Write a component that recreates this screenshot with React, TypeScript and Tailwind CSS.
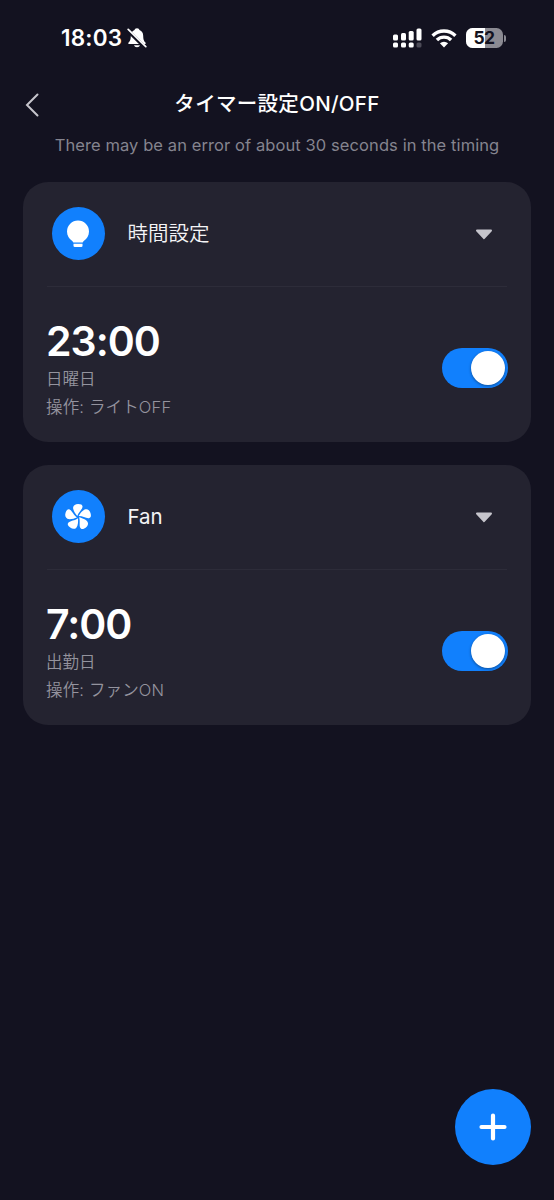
import { useState } from "react";

interface Timer {
  id: string;
  title: string;
  icon: "light" | "fan";
  time: string;
  days: string;
  action: string;
}

const TIMERS: Timer[] = [
  { id: "light", title: "時間設定", icon: "light", time: "23:00", days: "日曜日", action: "操作: ライトOFF" },
  { id: "fan", title: "Fan", icon: "fan", time: "7:00", days: "出勤日", action: "操作: ファンON" },
];

function BellOffIcon() {
  return (
    <svg width="20" height="22" viewBox="0 0 20 22" className="ml-[5px]">
      <path
        d="M10 1.2c1.5 0 2.3.8 2.5 1.9 2.4.9 3.7 3 3.7 5.6 0 4 .8 5.200 2.200 6.800.7.8.3 1.600-.7 1.600H2.300c-1 0-1.400-.8-.7-1.600C3 13.900 3.800 12.700 3.800 8.700c0-2.600 1.300-4.700 3.700-5.600.2-1.100 1-1.900 2.500-1.900Z"
        fill="#fff"
      />
      <path d="M7 18.300h6c-.4 1.200-1.500 2-3 2s-2.600-.8-3-2Z" fill="#fff" />
      <path d="M.4 3.200 18 20.400" stroke="#131220" strokeWidth="3.600" />
      <path d="M1.200 2.400 18.800 19.600" stroke="#fff" strokeWidth="1.700" strokeLinecap="round" />
    </svg>
  );
}

function SignalIcon() {
  return (
    <svg width="29" height="20" viewBox="0 0 29 20">
      <g fill="#fff">
        <rect x="0" y="6.500" width="5" height="6" rx="1.500" />
        <rect x="8" y="5" width="5" height="7.500" rx="1.500" />
        <rect x="15.700" y="3" width="5" height="9.500" rx="1.500" />
        <rect x="23.500" y="0.500" width="5" height="12" rx="1.500" />
        <rect x="0" y="14.500" width="5" height="5" rx="1.500" />
        <rect x="8" y="14.500" width="5" height="5" rx="1.500" />
        <rect x="15.700" y="14.500" width="5" height="5" rx="1.500" />
      </g>
      <rect x="23.500" y="14.500" width="5" height="5" rx="1.500" fill="#4c4b57" />
    </svg>
  );
}

function WifiIcon() {
  return (
    <svg width="26" height="19" viewBox="0 0 26 19" className="ml-[9px]">
      <g fill="none" stroke="#fff" strokeWidth="3.400">
        <path d="M1.600 6.700a16.200 16.200 0 0 1 22.800 0" />
        <path d="M5.900 11a10.100 10.100 0 0 1 14.200 0" />
      </g>
      <path d="M13 18.500 8.900 14.300a5.900 5.900 0 0 1 8.200 0Z" fill="#fff" />
    </svg>
  );
}

function Battery({ level }: { level: number }) {
  return (
    <div className="ml-[9px] flex items-center">
      <div className="relative h-5 w-[37px] overflow-hidden rounded-[6.5px] bg-[#8b8a92]">
        <div className="h-full bg-white" style={{ width: `${level}%` }} />
        <span className="absolute inset-0 text-center text-[17.500px] leading-[20px] font-bold tracking-[-0.5px] text-[#131220]">
          {level}
        </span>
      </div>
      <div className="ml-[1px] h-[7px] w-[2.500px] rounded-r-full bg-[#8b8a92]" />
    </div>
  );
}

function BulbIcon() {
  return (
    <svg width="24" height="28" viewBox="0 0 24 28">
      <path
        d="M12 .5a11 11 0 0 1 11 11c0 4.300-2.300 7.200-4.700 9.100-.8.600-1.400 1.100-1.600 1.900H7.300c-.2-.8-.8-1.300-1.600-1.900C3.300 18.700 1 15.800 1 11.500a11 11 0 0 1 11-11Z"
        fill="#fff"
      />
      <path d="M7.500 23.800h9v1.900a1.300 1.300 0 0 1-1.300 1.300H8.800a1.300 1.300 0 0 1-1.300-1.300Z" fill="#fff" />
    </svg>
  );
}

function FanIcon() {
  return (
    <svg width="28" height="28" viewBox="-14 -14 28 28">
      {[0, 72, 144, 216, 288].map((deg) => (
        <path
          key={deg}
          transform={`rotate(${deg})`}
          d="M-.7-.9C-2.600-3.200-5.200-6.800-4.900-9.600c.3-2.300 2.400-3.500 5-3.500 2.900 0 4.700.9 4.400 3.100C4.100-7.300.4-4.600-.7-.9Z"
          fill="#fff"
        />
      ))}
    </svg>
  );
}

function Toggle({ on, onChange }: { on: boolean; onChange: () => void }) {
  return (
    <button
      role="switch"
      aria-checked={on}
      onClick={onChange}
      className={`-mr-px flex h-10 w-[66px] items-center rounded-full px-[3px] ${
        on ? "justify-end bg-[#1180fd]" : "justify-start bg-[#4a4957]"
      }`}
    >
      <span className="h-[34px] w-[34px] rounded-full bg-white shadow-[0_1px_3px_rgba(0,0,0,0.4)]" />
    </button>
  );
}

function TimerCard({ timer }: { timer: Timer }) {
  const [on, setOn] = useState(true);

  return (
    <section className="h-[260px] rounded-[25px] bg-[#242330] px-6">
      <div className="flex h-[105px] items-center border-b border-[#2d2c39] pr-[14px] pl-[4.5px]">
        <div className="flex h-[53px] w-[53px] items-center justify-center rounded-full bg-[#1180fd]">
          {timer.icon === "light" ? <BulbIcon /> : <FanIcon />}
        </div>
        <h2
          className={`ml-[23px] flex-1 pt-[2px] text-[20.500px] text-[#f4f4f6] ${
            timer.icon === "light" ? "font-[350]" : "font-normal"
          }`}
        >
          {timer.title}
        </h2>
        <svg width="18" height="11" viewBox="0 0 18 11" className="mt-px">
          <path d="M2 1.500h14L9 9.200Z" fill="#c6c5cc" stroke="#c6c5cc" strokeWidth="2" strokeLinejoin="round" />
        </svg>
      </div>
      <div className="flex items-start justify-between pt-[30px]">
        <div>
          <p className="-ml-px text-[41px] leading-[48px] font-semibold tracking-[-1px] text-white">{timer.time}</p>
          <p className="-ml-px text-[16.500px] leading-[28px] font-[350] text-[#94939e]">{timer.days}</p>
          <p className="-ml-px text-[16.500px] leading-[28px] font-[350] tracking-[0.15px] text-[#94939e]">
            {timer.action}
          </p>
        </div>
        <div className="pt-[31px]">
          <Toggle on={on} onChange={() => setOn(!on)} />
        </div>
      </div>
    </section>
  );
}

export default function App() {
  return (
    <div className="flex h-[1200px] w-[554px] flex-col bg-[#131220] font-['Inter','Noto_Sans_CJK_JP',sans-serif]">
      <div className="flex h-[76px] items-center justify-between pr-[48px] pl-[61px]">
        <div className="flex items-center">
          <span className="text-[22.500px] font-semibold tracking-[0.2px] text-white">18:03</span>
          <BellOffIcon />
        </div>
        <div className="flex items-center">
          <SignalIcon />
          <WifiIcon />
          <Battery level={52} />
        </div>
      </div>

      <header className="grid h-[54px] grid-cols-[60px_1fr_60px] items-center pt-[3px]">
        <svg width="14" height="24" viewBox="0 0 14 24" className="ml-[25px]">
          <path d="M12.500 1.500 2 12l10.500 10.500" fill="none" stroke="#c6c5cc" strokeWidth="2" strokeLinecap="round" />
        </svg>
        <h1 className="text-center text-[20.500px] font-medium tracking-[0.3px] text-white">タイマー設定ON/OFF</h1>
      </header>
      <p className="h-[51.500px] text-center text-[16.500px] leading-[30px] tracking-[0.09px] text-[#85848f]">
        There may be an error of about 30 seconds in the timing
      </p>

      <main className="flex flex-1 flex-col gap-[23px] px-[23px]">
        {TIMERS.map((timer) => (
          <TimerCard key={timer.id} timer={timer} />
        ))}
      </main>

      <div className="flex justify-end pr-[23px] pb-[35px]">
        <button aria-label="Add" className="flex h-[76px] w-[76px] items-center justify-center rounded-full bg-[#1180fd]">
          <svg width="28" height="28" viewBox="0 0 28 28">
            <path d="M14 2.500v23M2.500 14h23" stroke="#fff" strokeWidth="4.200" strokeLinecap="round" />
          </svg>
        </button>
      </div>
    </div>
  );
}
